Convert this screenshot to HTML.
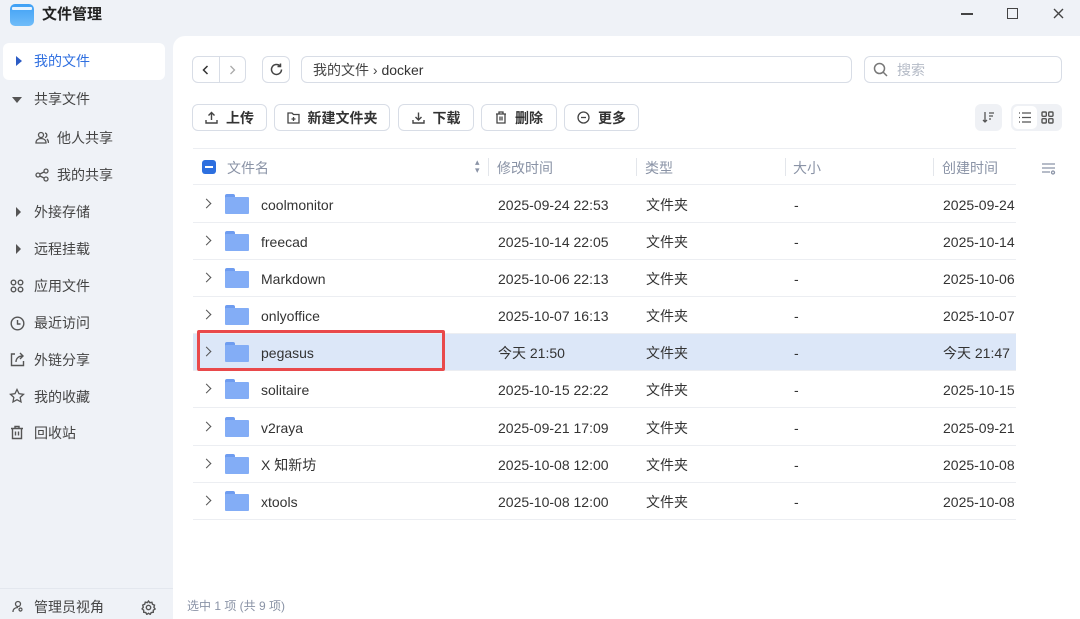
<!DOCTYPE html>
<html><head><meta charset="utf-8"><style>
*{box-sizing:border-box;margin:0;padding:0}
body{width:1080px;height:619px;overflow:hidden;background:#eff2f7;font-family:"Liberation Sans","Noto Sans CJK SC",sans-serif;color:#333;position:relative;font-size:14px}
.a{position:absolute}
.side{color:#444;font-size:14px;line-height:18px}
.main{left:173px;top:36px;width:907px;height:583px;background:#fff;border-top-left-radius:12px}
.btn{position:absolute;border:1px solid #d8dde6;border-radius:6px;background:#fff;height:27px}
.tb{top:104px;font-weight:bold;color:#333;font-size:14px;display:flex;align-items:center;justify-content:center;gap:8px}
.row{position:absolute;left:193px;width:823px;height:37px;border-bottom:1px solid #eceef2;font-size:14px;color:#333}
.row span{position:absolute;top:10px;line-height:18px}
.row .ch{left:10px;top:9px}
.hd{color:#8a93a6}
svg{display:block}
</style></head><body>
<div class="a" style="left:10px;top:4px;width:24px;height:22px;border-radius:5px;background:linear-gradient(#3fa0f5,#6fbcf9)"><div style="position:absolute;left:2px;top:3px;width:20px;height:3px;background:#e8f3fe;border-radius:1px"></div></div>
<div class="a" style="left:42px;top:6px;font-weight:bold;font-size:15px;color:#222;line-height:18px">文件管理</div>
<div class="a" style="left:961px;top:13px;width:12px;height:1.5px;background:#444"></div>
<div class="a" style="left:1007px;top:8px;width:11px;height:11px;border:1.3px solid #444"></div>
<svg class="a" style="left:1053px;top:8px" width="11" height="11" viewBox="0 0 11 11" stroke="#444" stroke-width="1.4"><path d="M1 1l9 9M10 1l-9 9"/></svg>
<div class="a" style="left:3px;top:43px;width:162px;height:37px;background:#fff;border-radius:6px"></div>
<div class="a" style="left:16px;top:56px;width:0;height:0;border-left:6px solid #2c5cc5;border-top:5px solid transparent;border-bottom:5px solid transparent"></div>
<div class="a side" style="left:34px;top:52px;color:#2f6fe0">我的文件</div>
<div class="a" style="left:12px;top:97px;border-top:6px solid #555;border-left:5px solid transparent;border-right:5px solid transparent"></div>
<div class="a side" style="left:34px;top:90px">共享文件</div>
<svg class="a" style="left:35px;top:131px" width="14" height="14" viewBox="0 0 14 14" fill="none" stroke="#555" stroke-width="1.3"><circle cx="6" cy="4" r="2.5"/><path d="M1 12c0-3 2-4.5 5-4.5s5 1.5 5 4.5zM10 2a2.3 2.3 0 010 4.5M12 8c1 1 1.5 2 1.5 4"/></svg>
<div class="a side" style="left:57px;top:129px">他人共享</div>
<svg class="a" style="left:35px;top:168px" width="14" height="14" viewBox="0 0 14 14" fill="none" stroke="#555" stroke-width="1.3"><circle cx="3" cy="7" r="2"/><circle cx="11" cy="3" r="2"/><circle cx="11" cy="11" r="2"/><path d="M5 6l4-2M5 8l4 2"/></svg>
<div class="a side" style="left:57px;top:166px">我的共享</div>
<div class="a" style="left:16px;top:207px;border-left:5px solid #555;border-top:5px solid transparent;border-bottom:5px solid transparent"></div>
<div class="a side" style="left:34px;top:203px">外接存储</div>
<div class="a" style="left:16px;top:244px;border-left:5px solid #555;border-top:5px solid transparent;border-bottom:5px solid transparent"></div>
<div class="a side" style="left:34px;top:240px">远程挂载</div>
<svg class="a" style="left:10px;top:279px" width="14" height="14" viewBox="0 0 14 14" fill="none" stroke="#555" stroke-width="1.4"><circle cx="3.5" cy="3.5" r="2.3"/><circle cx="10.5" cy="3.5" r="2.3"/><circle cx="3.5" cy="10.5" r="2.3"/><circle cx="10.5" cy="10.5" r="2.3"/></svg>
<div class="a side" style="left:34px;top:277px">应用文件</div>
<svg class="a" style="left:10px;top:316px" width="15" height="15" viewBox="0 0 15 15" fill="none" stroke="#555" stroke-width="1.4"><circle cx="7.5" cy="7.5" r="6.3"/><path d="M7.5 4v4h3"/></svg>
<div class="a side" style="left:34px;top:314px">最近访问</div>
<svg class="a" style="left:10px;top:352px" width="15" height="15" viewBox="0 0 15 15" fill="none" stroke="#555" stroke-width="1.4"><path d="M5 2H1.5v11.5h12V9M6 10c0-4 3-6 7-6M10 1l3 3-3 3"/></svg>
<div class="a side" style="left:34px;top:351px">外链分享</div>
<svg class="a" style="left:9px;top:388px" width="16" height="16" viewBox="0 0 16 16" fill="none" stroke="#555" stroke-width="1.3"><path d="M8 1.5l2 4.2 4.5.6-3.3 3.1.8 4.5L8 11.7l-4 2.2.8-4.5L1.5 6.3 6 5.7z"/></svg>
<div class="a side" style="left:34px;top:388px">我的收藏</div>
<svg class="a" style="left:10px;top:425px" width="14" height="15" viewBox="0 0 14 15" fill="none" stroke="#555" stroke-width="1.4"><path d="M1 3.5h12M5 3.5V1.5h4v2M2.5 3.5v10h9v-10M5.5 6.5v4M8.5 6.5v4"/></svg>
<div class="a side" style="left:34px;top:424px">回收站</div>
<div class="a" style="left:0;top:588px;width:1080px;height:1px;background:#e3e7ee"></div>
<svg class="a" style="left:12px;top:600px" width="14" height="14" viewBox="0 0 14 14" fill="none" stroke="#555" stroke-width="1.3"><circle cx="6" cy="4" r="2.5"/><path d="M1 12c0-3 2-4.5 5-4.5M10 9.5a1.5 1.5 0 100 .1"/></svg>
<div class="a side" style="left:34px;top:598px">管理员视角</div>
<svg class="a" style="left:141px;top:600px" width="15" height="15" viewBox="0 0 15 15" fill="none" stroke="#555" stroke-width="1.4"><circle cx="7.5" cy="7.5" r="2.2"/><path d="M7.5 1l1.3 1.7 2.1-.4.6 2 2 .9-.6 2.1 1.2 1.7-1.8 1.2v2.1l-2.1.2-1 1.9-1.7-1.2-1.7 1.2-1-1.9-2.1-.2v-2.1L1.1 8.9l1.2-1.7-.6-2.1 2-.9.6-2 2.1.4z"/></svg>
<div class="a main"></div>
<div class="a" style="left:173px;top:589px;width:907px;height:30px;background:#fff"></div>
<div class="a" style="left:187px;top:599px;font-size:12px;color:#8a93a6;line-height:15px">选中 1 项 (共 9 项)</div>
<div class="btn" style="left:192px;top:56px;width:54px"><div style="position:absolute;left:26px;top:0;width:1px;height:25px;background:#d8dde6"></div>
<svg style="position:absolute;left:9px;top:8px" width="7" height="10" viewBox="0 0 7 10" fill="none" stroke="#333" stroke-width="1.5"><path d="M5.5 1L1.5 5l4 4"/></svg>
<svg style="position:absolute;left:36px;top:8px" width="7" height="10" viewBox="0 0 7 10" fill="none" stroke="#aaa" stroke-width="1.3"><path d="M1.5 1l4 4-4 4"/></svg></div>
<div class="btn" style="left:262px;top:56px;width:28px"><svg style="position:absolute;left:6px;top:5px" width="15" height="15" viewBox="0 0 15 15" fill="none" stroke="#444" stroke-width="1.5"><path d="M12.5 7.5a5 5 0 11-1.5-3.6M11.5 1.5v3h-3"/></svg></div>
<div class="btn" style="left:301px;top:56px;width:551px;font-size:14px;color:#444;padding:5px 11px;line-height:16px">我的文件 › <span style="color:#333">docker</span></div>
<div class="btn" style="left:864px;top:56px;width:198px;font-size:14px;color:#b4bac6;padding:5px 0 0 32px;line-height:16px">搜索</div>
<svg class="a" style="left:873px;top:62px" width="15" height="15" viewBox="0 0 15 15" fill="none" stroke="#777" stroke-width="1.5"><circle cx="6.5" cy="6.5" r="5"/><path d="M10 10l4 4"/></svg>
<div class="btn tb" style="left:192px;width:75px"><svg width="13" height="13" viewBox="0 0 13 13" fill="none" stroke="#444" stroke-width="1.4"><path d="M6.5 9V1.5M3.5 4.5l3-3 3 3M1 9v3h11V9"/></svg>上传</div>
<div class="btn tb" style="left:274px;width:116px"><svg width="13" height="12" viewBox="0 0 13 12" fill="none" stroke="#444" stroke-width="1.3"><path d="M1 1h4l1.5 1.5H12v8.5H1zM6.5 5v4M4.5 7h4"/></svg>新建文件夹</div>
<div class="btn tb" style="left:398px;width:76px"><svg width="13" height="13" viewBox="0 0 13 13" fill="none" stroke="#444" stroke-width="1.4"><path d="M6.5 1.5V9M3.5 6l3 3 3-3M1 9v3h11V9"/></svg>下载</div>
<div class="btn tb" style="left:481px;width:76px"><svg width="12" height="13" viewBox="0 0 12 13" fill="none" stroke="#444" stroke-width="1.3"><path d="M1 3h10M4 3V1h4v2M2 3v9h8V3M5 5.5v4M7 5.5v4"/></svg>删除</div>
<div class="btn tb" style="left:564px;width:75px"><svg width="13" height="13" viewBox="0 0 13 13" fill="none" stroke="#444" stroke-width="1.3"><circle cx="6.5" cy="6.5" r="5.5"/><path d="M4 6.5h5"/></svg>更多</div>
<div class="a" style="left:975px;top:104px;width:27px;height:27px;background:#eff1f5;border-radius:6px"><svg style="position:absolute;left:7px;top:7px" width="13" height="13" viewBox="0 0 13 13" fill="none" stroke="#555" stroke-width="1.3"><path d="M3 1v10M1 9l2 2 2-2M7 2h5M7 5h4M7 8h2"/></svg></div>
<div class="a" style="left:1011px;top:104px;width:51px;height:27px;background:#eff1f5;border-radius:6px"></div>
<div class="a" style="left:1013px;top:106px;width:24px;height:23px;background:#fff;border-radius:5px"><svg style="position:absolute;left:5px;top:5px" width="14" height="13" viewBox="0 0 14 13" fill="none" stroke="#555" stroke-width="1.3"><path d="M1 2h1M1 6.5h1M1 11h1M4 2h9M4 6.5h9M4 11h9"/></svg></div>
<svg class="a" style="left:1041px;top:111px" width="13" height="13" viewBox="0 0 13 13" fill="none" stroke="#555" stroke-width="1.4"><rect x="1" y="1" width="4.3" height="4.3" rx="1"/><rect x="7.7" y="1" width="4.3" height="4.3" rx="1"/><rect x="1" y="7.7" width="4.3" height="4.3" rx="1"/><rect x="7.7" y="7.7" width="4.3" height="4.3" rx="1"/></svg>
<div class="row" style="top:148px;border-top:1px solid #eceef2">
<div style="position:absolute;left:9px;top:11px;width:14px;height:14px;background:#2d6fdf;border-radius:3px"><div style="position:absolute;left:3px;top:6px;width:8px;height:2px;background:#fff"></div></div>
<span class="hd" style="left:34px">文件名</span>
<span class="hd" style="left:282px;top:9px;font-size:9px;line-height:8px">▴<br>▾</span>
<div style="position:absolute;left:295px;top:9px;width:1px;height:18px;background:#e3e6eb"></div>
<span class="hd" style="left:304px">修改时间</span>
<div style="position:absolute;left:443px;top:9px;width:1px;height:18px;background:#e3e6eb"></div>
<span class="hd" style="left:452px">类型</span>
<div style="position:absolute;left:592px;top:9px;width:1px;height:18px;background:#e3e6eb"></div>
<span class="hd" style="left:600px">大小</span>
<div style="position:absolute;left:740px;top:9px;width:1px;height:18px;background:#e3e6eb"></div>
<span class="hd" style="left:749px">创建时间</span>
</div>
<svg class="a" style="left:1041px;top:162px" width="15" height="13" viewBox="0 0 15 13" fill="none" stroke="#8a93a6" stroke-width="1.3"><path d="M1 2h13M1 6h13M1 10h8"/><circle cx="12" cy="10.5" r="1.5"/></svg>
<div class="row" style="top:186px"><span class="ch">›</span><span style="left:68px">coolmonitor</span><span style="left:305px">2025-09-24 22:53</span><span style="left:453px">文件夹</span><span style="left:601px">-</span><span style="left:750px">2025-09-24</span></div>
<div class="row" style="top:223px"><span class="ch">›</span><span style="left:68px">freecad</span><span style="left:305px">2025-10-14 22:05</span><span style="left:453px">文件夹</span><span style="left:601px">-</span><span style="left:750px">2025-10-14</span></div>
<div class="row" style="top:260px"><span class="ch">›</span><span style="left:68px">Markdown</span><span style="left:305px">2025-10-06 22:13</span><span style="left:453px">文件夹</span><span style="left:601px">-</span><span style="left:750px">2025-10-06</span></div>
<div class="row" style="top:297px"><span class="ch">›</span><span style="left:68px">onlyoffice</span><span style="left:305px">2025-10-07 16:13</span><span style="left:453px">文件夹</span><span style="left:601px">-</span><span style="left:750px">2025-10-07</span></div>
<div class="row" style="top:334px;background:#dce7f8"><span class="ch">›</span><span style="left:68px">pegasus</span><span style="left:305px">今天 21:50</span><span style="left:453px">文件夹</span><span style="left:601px">-</span><span style="left:750px">今天 21:47</span></div>
<div class="row" style="top:371px"><span class="ch">›</span><span style="left:68px">solitaire</span><span style="left:305px">2025-10-15 22:22</span><span style="left:453px">文件夹</span><span style="left:601px">-</span><span style="left:750px">2025-10-15</span></div>
<div class="row" style="top:409px"><span class="ch">›</span><span style="left:68px">v2raya</span><span style="left:305px">2025-09-21 17:09</span><span style="left:453px">文件夹</span><span style="left:601px">-</span><span style="left:750px">2025-09-21</span></div>
<div class="row" style="top:446px"><span class="ch">›</span><span style="left:68px">X 知新坊</span><span style="left:305px">2025-10-08 12:00</span><span style="left:453px">文件夹</span><span style="left:601px">-</span><span style="left:750px">2025-10-08</span></div>
<div class="row" style="top:483px"><span class="ch">›</span><span style="left:68px">xtools</span><span style="left:305px">2025-10-08 12:00</span><span style="left:453px">文件夹</span><span style="left:601px">-</span><span style="left:750px">2025-10-08</span></div>
<style>.row .ch{font-size:0}.row .ch:before{content:"";display:block;width:6px;height:6px;border-right:1.5px solid #555;border-top:1.5px solid #555;transform:rotate(45deg);margin-top:5px}
.fo{position:absolute;left:225px;width:24px;height:20px}.fo:before{content:"";position:absolute;left:0;top:0;width:10px;height:5px;background:#6e9cf0;border-radius:2px 2px 0 0}.fo:after{content:"";position:absolute;left:0;top:3px;width:24px;height:17px;background:#83adf6;border-radius:1px}</style>
<div class="fo" style="top:194px"></div><div class="fo" style="top:231px"></div><div class="fo" style="top:268px"></div><div class="fo" style="top:305px"></div><div class="fo" style="top:342px"></div><div class="fo" style="top:379px"></div><div class="fo" style="top:417px"></div><div class="fo" style="top:454px"></div><div class="fo" style="top:491px"></div>
<div class="a" style="left:197px;top:330px;width:248px;height:41px;border:3px solid #e9494b;border-radius:2px"></div>
</body></html>
